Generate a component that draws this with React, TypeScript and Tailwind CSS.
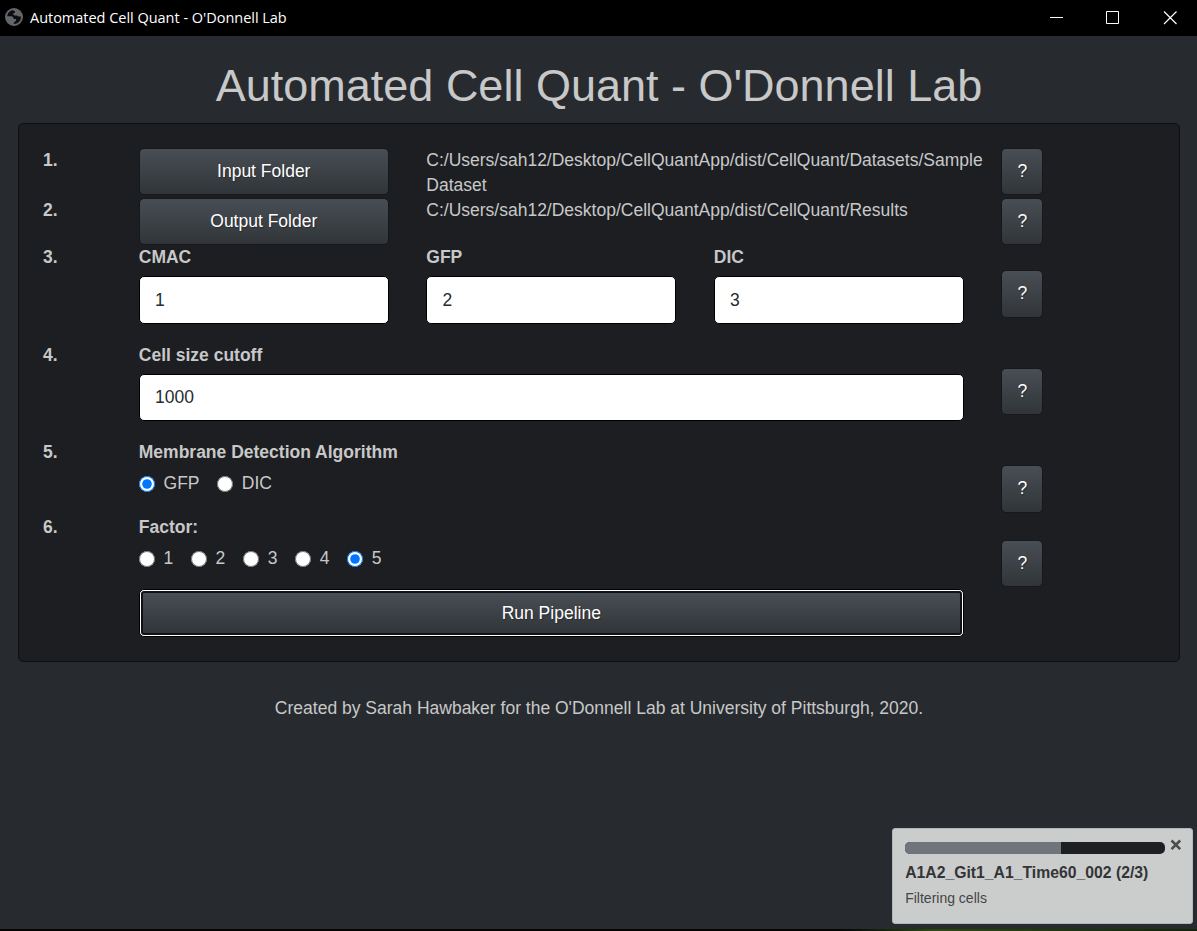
import React from 'react';

const buttonClass =
  "block rounded-[5px] border border-[#17181b] bg-linear-to-b from-[#484e55] via-[#3a3f44] via-60% to-[#313539] text-center text-[17.5px] leading-[25px] text-white [text-shadow:1px_1px_1px_rgba(0,0,0,0.3)]";

const inputClass =
  "mt-[6.5px] block w-full rounded-[5px] border border-black bg-white px-[15.3px] text-[17.5px] text-[#272b30] outline-none";

function Help({ offset, height = "h-[47px]" }: { offset: string; height?: string }) {
  return (
    <div className={`col-span-2 pl-[18.75px] ${offset}`}>
      <button className={`${buttonClass} ${height} w-[42px]`}>?</button>
    </div>
  );
}

function Num({ n }: { n: number }) {
  return <div className="col-span-1 px-[18.75px] font-bold">{n}.</div>;
}

function Field({ label, value }: { label: string; value: string }) {
  return (
    <div className="col-span-3 px-[18.75px]">
      <label className="block font-bold">{label}</label>
      <input className={`${inputClass} h-[48px]`} defaultValue={value} />
    </div>
  );
}

function Radios({ name, options, selected }: { name: string; options: string[]; selected: string }) {
  return (
    <div className="mt-[6px] flex gap-[17.5px]">
      {options.map((o) => (
        <label key={o} className="flex items-center">
          <input type="radio" name={name} defaultChecked={o === selected} className="mt-[2px] mr-[8.8px] size-4" />
          {o}
        </label>
      ))}
    </div>
  );
}

export default function App() {
  return (
    <div className="relative flex h-[931px] w-[1197px] flex-col overflow-hidden bg-[#272b30] font-['Liberation_Sans',Arial,sans-serif] text-[17.5px] leading-[25px] text-[#c8c8c8]">
      <header className="flex h-9 shrink-0 items-center bg-black text-white">
        <svg className="-mt-[2px] ml-[5px] size-[18px]" viewBox="0 0 18 18">
          <circle cx="9" cy="9" r="8" fill="#0c0d0e" stroke="#63676b" strokeWidth="2" />
          <path
            d="M8 1.5H12L16.5 5.5V8.5H13.5L12 7.6H9.5L8.2 6.6V5.4L10 4.6V3.2L8 2.6ZM1.5 8.2H6.8L8.6 9.8V11H11V12.8L9.2 14.2L8.4 16.6L4 15.4L1.5 11Z"
            fill="#63676b"
          />
        </svg>
        <span className="ml-[7px] font-['Open_Sans',sans-serif] text-[14.5px] leading-5 tracking-[-0.02px]">
          Automated Cell Quant - O'Donnell Lab
        </span>
        <svg className="ml-auto h-9 w-[171px]" viewBox="0 0 171 36" fill="none" stroke="#fff">
          <path d="M24 17.5H37" />
          <path d="M80.5 11.5h12v12h-12z" />
          <path d="M138 11.5 150.5 24M150.5 11.5 138 24" strokeWidth="1.2" />
        </svg>
      </header>
      <h1 className="mt-[25px] pl-px text-center text-[45px] leading-[50px] font-normal">
        Automated Cell Quant - O'Donnell Lab
      </h1>
      <main className="mx-[18px] mt-[12px] h-[539px] w-[1162px] shrink-0 rounded-[5px] border border-[#0e0f11] bg-[#1c1e22] pt-[23.5px] pl-[5.2px]">
        <div className="w-[1150px]">
          <div className="grid h-[50px] grid-cols-12">
            <Num n={1} />
            <div className="col-span-3 px-[18.75px] pt-[0.5px]">
              <button className={`${buttonClass} h-[47px] w-full`}>Input Folder</button>
            </div>
            <div className="col-span-6 px-[18.75px] whitespace-nowrap">
              C:/Users/sah12/Desktop/CellQuantApp/dist/CellQuant/Datasets/Sample
              <br />
              Dataset
            </div>
            <Help offset="pt-[0.5px]" />
          </div>
          <div className="grid h-[47px] grid-cols-12">
            <Num n={2} />
            <div className="col-span-3 px-[18.75px] pt-[0.5px]">
              <button className={`${buttonClass} h-[47px] w-full`}>Output Folder</button>
            </div>
            <div className="col-span-6 px-[18.75px] whitespace-nowrap">
              C:/Users/sah12/Desktop/CellQuantApp/dist/CellQuant/Results
            </div>
            <Help offset="pt-[0.5px]" />
          </div>
          <div className="grid h-[98px] grid-cols-12">
            <Num n={3} />
            <Field label="CMAC" value="1" />
            <Field label="GFP" value="2" />
            <Field label="DIC" value="3" />
            <Help offset="pt-[25.5px]" height="h-[48px] pb-px" />
          </div>
          <div className="grid h-[97px] grid-cols-12">
            <Num n={4} />
            <div className="col-span-9 px-[18.75px]">
              <label className="block font-bold">Cell size cutoff</label>
              <input className={`${inputClass} h-[47px]`} defaultValue="1000" />
            </div>
            <Help offset="pt-[25.5px]" />
          </div>
          <div className="grid h-[75px] grid-cols-12">
            <Num n={5} />
            <div className="col-span-9 px-[18.75px]">
              <div className="font-bold">Membrane Detection Algorithm</div>
              <Radios name="algorithm" options={["GFP", "DIC"]} selected="GFP" />
            </div>
            <Help offset="pt-[25.4px]" height="h-[48px]" />
          </div>
          <div className="grid h-[74px] grid-cols-12">
            <Num n={6} />
            <div className="col-span-9 px-[18.75px]">
              <div className="font-bold">Factor:</div>
              <Radios name="factor" options={["1", "2", "3", "4", "5"]} selected="5" />
            </div>
            <Help offset="pt-[25.5px]" />
          </div>
          <div className="grid grid-cols-12">
            <div className="col-span-9 col-start-2 px-[18.75px]">
              <button className="block h-[48px] w-full rounded-[5px] border border-black bg-white p-px">
                <span className="flex h-full items-center justify-center rounded-[3px] border-2 border-[#101114] bg-linear-to-b from-[#484e55] via-[#3a3f44] via-60% to-[#313539] pt-px text-white [text-shadow:1px_1px_1px_rgba(0,0,0,0.3)]">
                  Run Pipeline
                </span>
              </button>
            </div>
          </div>
        </div>
      </main>
      <footer className="mt-[34px] pl-px text-center">
        Created by Sarah Hawbaker for the O'Donnell Lab at University of Pittsburgh, 2020.
      </footer>
      <div className="mt-auto h-[2px] shrink-0 bg-linear-to-r from-[#050506] from-70% via-[#294a0a] via-78% to-[#16240b]" />
      <aside className="absolute top-[828px] left-[892px] h-[96px] w-[301px] rounded-[3px] border border-[#b4b7b8] bg-[#cbcdcc] text-[#333436]">
        <div className="flex items-start pt-[13px] pl-[12px]">
          <div className="h-3 w-[260px] overflow-hidden rounded-[5px] bg-[#1e1f23]">
            <div className="h-full w-3/5 bg-[#6e757b]" />
          </div>
          <svg className="-mt-[3px] ml-[5px] size-3" viewBox="0 0 12 12" stroke="#4b4c4d" strokeWidth="2.6">
            <path d="M1.5 1.5 10.2 10.2M10.2 1.5 1.5 10.2" />
          </svg>
        </div>
        <div className="mt-[7px] pl-[12.2px] text-[15.75px] leading-6 font-bold">A1A2_Git1_A1_Time60_002 (2/3)</div>
        <div className="mt-[3px] pl-[12.2px] text-[14px] leading-5 text-[#444547]">Filtering cells</div>
      </aside>
    </div>
  );
}
